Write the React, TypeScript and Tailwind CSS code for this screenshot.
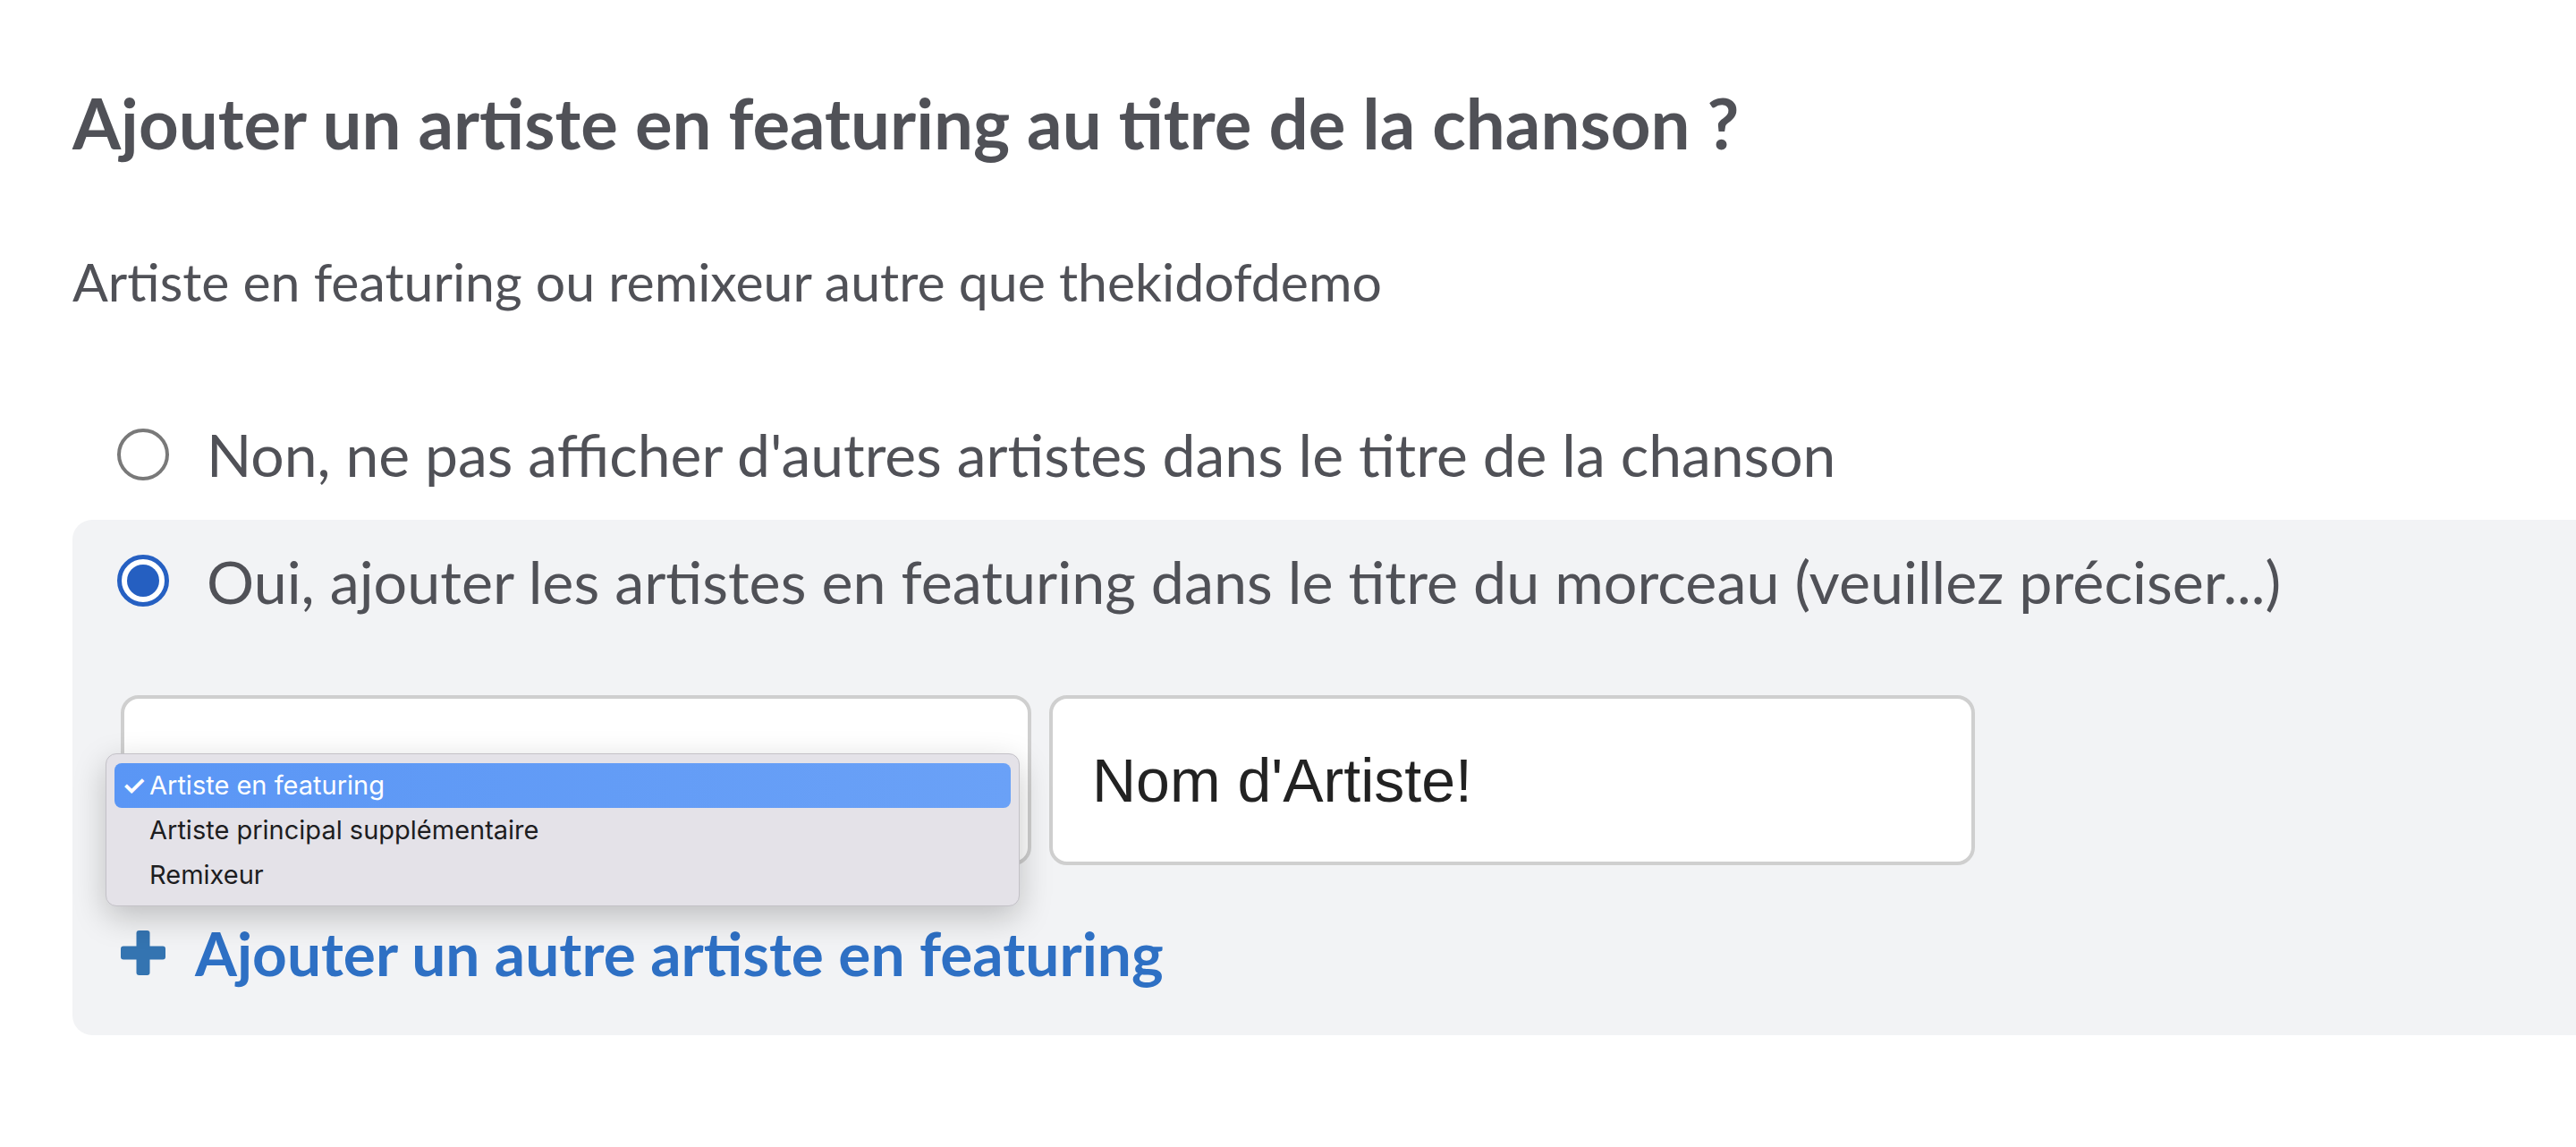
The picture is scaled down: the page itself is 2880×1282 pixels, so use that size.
import React from "react";

/* ─── Data ─────────────────────────────────────────────────────────── */
const ROLES = ["Artiste en featuring", "Artiste principal supplémentaire", "Remixeur"];

function Radio({ checked }: { checked?: boolean }) {
  if (checked) {
    return (
      <span className="flex h-[58px] w-[58px] flex-shrink-0 items-center justify-center rounded-full border-[5px] border-[#2660c2] bg-white">
        <span className="h-[36px] w-[36px] rounded-full bg-[#255fc1]" />
      </span>
    );
  }
  return <span className="h-[58px] w-[58px] flex-shrink-0 rounded-full border-[4px] border-[#797979] bg-white" />;
}

function PlusIcon() {
  return (
    <svg width="50" height="50" viewBox="0 0 50 50" className="flex-shrink-0">
      <rect x="0" y="17.5" width="50" height="15" rx="3" fill="#3474b1" />
      <rect x="17.5" y="0" width="15" height="50" rx="3" fill="#3474b1" />
    </svg>
  );
}

export default function App() {
  return (
    <div className="min-h-screen w-full overflow-hidden bg-white pt-[90px] font-['Lato',sans-serif] text-[#505157]">
      {/* Heading */}
      <h1 className="pl-[81px] text-[78px] font-bold leading-[94px] whitespace-nowrap">
        Ajouter un artiste en featuring au titre de la chanson ?
      </h1>
      <p className="mt-[96px] pl-[81px] text-[59px] leading-[70px] whitespace-nowrap">
        Artiste en featuring ou remixeur autre que thekidofdemo
      </p>

      {/* Option: non */}
      <div className="mt-[118px] flex items-center gap-[42px] pl-[131px]">
        <Radio />
        <span className="text-[66px] leading-[80px] whitespace-nowrap">
          Non, ne pas afficher d'autres artistes dans le titre de la chanson
        </span>
      </div>

      {/* Option: oui (selected panel) */}
      <div className="ml-[81px] mt-[33px] rounded-l-[22px] bg-[#f2f3f5] pb-[52px] pl-[50px] pt-[28px]">
        <div className="flex items-center gap-[42px]">
          <Radio checked />
          <span className="text-[66.4px] leading-[80px] whitespace-nowrap">
            Oui, ajouter les artistes en featuring dans le titre du morceau (veuillez préciser...)
          </span>
        </div>

        {/* Inputs */}
        <div className="mt-[88px] flex gap-[20px] pl-[4px]">
          <div className="relative h-[190px] w-[1018px] rounded-[20px] border-[4px] border-[#cfcfcf] bg-white">
            {/* Open native menu */}
            <div className="absolute left-[-21px] top-[61px] z-10 w-[1022px] rounded-[12px] border border-[#c3c1c7] bg-[#e4e2e8] px-[9px] pb-[9px] pt-[10px] font-['Inter',sans-serif] text-[29px] text-[#1d1d1f] shadow-[0_12px_36px_rgba(0,0,0,0.22)]">
              {ROLES.map((r, i) => (
                <div
                  key={r}
                  className={
                    i === 0
                      ? "flex h-[50px] items-center rounded-[8px] bg-gradient-to-r from-[#5a96f5] to-[#6aa1f7] text-white"
                      : "flex h-[50px] items-center"
                  }
                >
                  <span className="w-[39px] pl-[8px] text-[31px] font-semibold leading-[50px]">{i === 0 ? "✓" : ""}</span>
                  <span className="leading-[50px] whitespace-nowrap">{r}</span>
                </div>
              ))}
            </div>
          </div>
          <div className="flex h-[190px] w-[1035px] items-center rounded-[20px] border-[4px] border-[#cfcfcf] bg-white pl-[44px] font-['Liberation_Sans',Arial,sans-serif] text-[68px] text-[#222222]">
            Nom d'Artiste!
          </div>
        </div>

        {/* Add another */}
        <div className="mt-[58px] flex items-center gap-[33px] pl-[4px]">
          <PlusIcon />
          <span className="text-[67.6px] font-bold leading-[80px] text-[#2e70c4] whitespace-nowrap">
            Ajouter un autre artiste en featuring
          </span>
        </div>
      </div>
    </div>
  );
}
